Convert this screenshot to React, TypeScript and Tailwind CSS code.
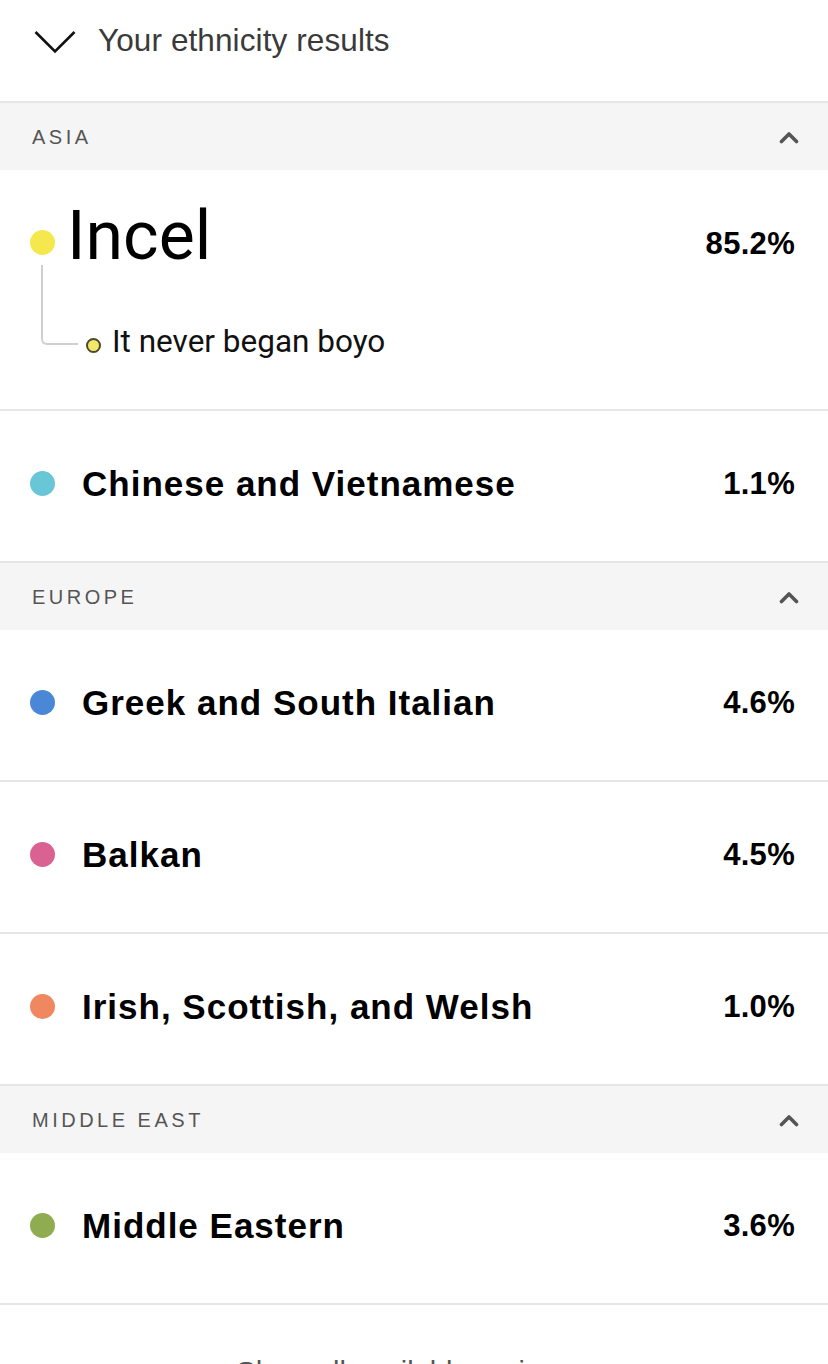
import React from "react";

type Entry = { name: string; pct: string; color: string };

type Region = { title: string; entries: Entry[] };

const regions: Region[] = [
  {
    title: "EUROPE",
    entries: [
      { name: "Greek and South Italian", pct: "4.6%", color: "bg-[#4a87d6]" },
      { name: "Balkan", pct: "4.5%", color: "bg-[#da6293]" },
      { name: "Irish, Scottish, and Welsh", pct: "1.0%", color: "bg-[#ef8760]" },
    ],
  },
  {
    title: "MIDDLE EAST",
    entries: [{ name: "Middle Eastern", pct: "3.6%", color: "bg-[#8fac50]" }],
  },
];

function ChevronUp() {
  return (
    <svg width="20" height="14" viewBox="0 0 20 14" fill="none">
      <path d="M2.5 11.5L10 4L17.5 11.5" stroke="#555" strokeWidth="3.6" strokeLinecap="round" strokeLinejoin="round" />
    </svg>
  );
}

function SectionHeader({ title }: { title: string }) {
  return (
    <div className="h-[67px] bg-[#f5f5f5] pl-[32px] pr-[29px] flex items-center justify-between">
      <span className="text-[20px] leading-none tracking-[3.5px] text-[#555]">{title}</span>
      <ChevronUp />
    </div>
  );
}

function Row({ entry }: { entry: Entry }) {
  return (
    <div className="h-[152px] border-b-2 border-[#e6e6e6] pl-[30px] pr-[33px] pb-[6px] flex items-center">
      <span className={`w-[25px] h-[25px] rounded-full shrink-0 ${entry.color}`} />
      <span className="ml-[27px] flex-1 text-[35px] leading-none font-bold tracking-[1px] text-black">{entry.name}</span>
      <span className="text-[31px] leading-none font-bold tracking-[0.3px] text-black">{entry.pct}</span>
    </div>
  );
}

export default function App() {
  return (
    <div className="w-[828px] h-[1364px] overflow-hidden bg-white font-['Liberation_Sans',Arial,sans-serif]">
      {/* top bar */}
      <div className="h-[103px] border-b-2 border-[#e6e6e6] pl-[34px] pt-[25px] flex items-start">
        <svg width="42" height="24" viewBox="0 0 42 24" fill="none" className="mt-[5px]">
          <path d="M1.5 2L21 21.5L40.5 2" stroke="#111" strokeWidth="2.6" />
        </svg>
        <span className="ml-[22px] text-[31.5px] leading-none tracking-[0.1px] text-[#3a3a3a]">Your ethnicity results</span>
      </div>

      <SectionHeader title="ASIA" />

      {/* main result with its sub-population */}
      <div className="h-[241px] border-b-2 border-[#e6e6e6] pl-[30px] pr-[33px] pt-[30px]">
        <div className="h-[65px] flex items-start">
          <span className="mt-[30px] w-[25px] h-[25px] rounded-full bg-[#f5e84f] shrink-0" />
          <span className="ml-[12px] mt-[2px] flex-1 text-[68px] leading-none text-black font-['Roboto',sans-serif]">Incel</span>
          <span className="mt-[28px] text-[31px] leading-none font-bold tracking-[0.3px] text-black">85.2%</span>
        </div>
        <div className="flex items-start">
          <div className="ml-[11px] w-[37px] h-[80px] border-l-2 border-b-2 border-[#cfcfcf] rounded-bl-[6px]" />
          <div className="mt-[58px] h-[44px] flex items-center">
            <span className="ml-[8px] w-[15px] h-[15px] rounded-full bg-[#f3e86a] border-2 border-[#4d4a2a]" />
            <span className="ml-[11px] -mt-[6px] text-[31.5px] leading-none text-[#111] font-['Roboto',sans-serif]">It never began boyo</span>
          </div>
        </div>
      </div>

      <Row entry={{ name: "Chinese and Vietnamese", pct: "1.1%", color: "bg-[#69c6d7]" }} />

      {regions.map((r) => (
        <div key={r.title}>
          <SectionHeader title={r.title} />
          {r.entries.map((e) => (
            <Row key={e.name} entry={e} />
          ))}
        </div>
      ))}

      <div className="pt-[53px] flex justify-center items-center gap-[8px] text-[#555]">
        <span className="text-[29px] leading-none">Show all available regions</span>
        <svg width="12" height="20" viewBox="0 0 12 20" fill="none">
          <path d="M2 2L10 10L2 18" stroke="#555" strokeWidth="2.6" />
        </svg>
      </div>
    </div>
  );
}
